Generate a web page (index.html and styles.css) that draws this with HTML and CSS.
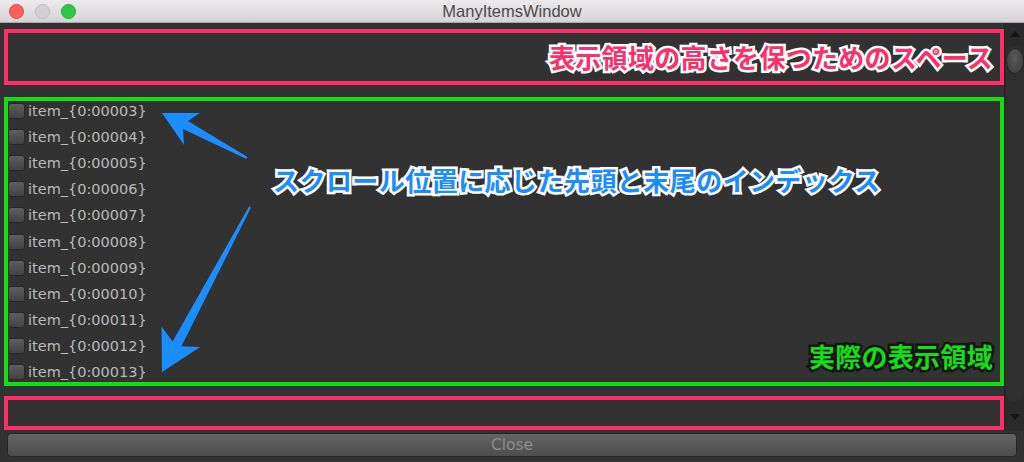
FILE: index.html
```html
<!DOCTYPE html>
<html lang="ja">
<head>
<meta charset="utf-8">
<title>ManyItemsWindow</title>
<link rel="stylesheet" href="styles.css">
</head>
<body>
<div class="window">
  <header class="titlebar">
    <div class="lights">
      <span class="light red"></span>
      <span class="light gray"></span>
      <span class="light green"></span>
    </div>
    <div class="title">ManyItemsWindow</div>
    <div></div>
  </header>
  <div class="main">
    <div class="content">
      <div class="spacer top">
        <span class="note pink">表示領域の高さを保つためのスペース</span>
      </div>
      <div class="visible">
        <ul class="items">
          <li class="item"><span class="check"></span>item_{0:00003}</li>
          <li class="item"><span class="check"></span>item_{0:00004}</li>
          <li class="item"><span class="check"></span>item_{0:00005}</li>
          <li class="item"><span class="check"></span>item_{0:00006}</li>
          <li class="item"><span class="check"></span>item_{0:00007}</li>
          <li class="item"><span class="check"></span>item_{0:00008}</li>
          <li class="item"><span class="check"></span>item_{0:00009}</li>
          <li class="item"><span class="check"></span>item_{0:00010}</li>
          <li class="item"><span class="check"></span>item_{0:00011}</li>
          <li class="item"><span class="check"></span>item_{0:00012}</li>
          <li class="item"><span class="check"></span>item_{0:00013}</li>
        </ul>
        <span class="note green-note">実際の表示領域</span>
      </div>
      <div class="spacer bottom"></div>
    </div>
    <div class="scrollbar">
      <span class="arrow up"></span>
      <div class="groove"><div class="thumb"></div></div>
      <span class="arrow down"></span>
    </div>
  </div>
  <footer class="footer">
    <button class="close">Close</button>
  </footer>

  <div class="note blue callout">スクロール位置に応じた先頭と末尾のインデックス</div>
  <svg class="arrows" width="1024" height="462" viewBox="0 0 1024 462">
    <polygon fill="#1b8dff" points="162,113 200,113 188,121 247.5,157 246.5,159 183,129 184,145"/>
    <polygon fill="#1b8dff" points="162,372 161.5,326.5 172.6,341.5 249,206.5 251,207.5 181.4,346.2 200.2,347"/>
  </svg>
</div>
</body>
</html>
```
FILE: styles.css
```css
* { box-sizing: border-box; }
html, body { margin: 0; padding: 0; }
body { background: #323232; width: 1024px; height: 462px; overflow: hidden; }

.window {
  position: relative;
  width: 1024px;
  height: 462px;
  background: #323232;
  display: flex;
  flex-direction: column;
}

.titlebar {
  height: 23px;
  flex: none;
  display: grid;
  grid-template-columns: 1fr auto 1fr;
  align-items: center;
  background: linear-gradient(#eceaec, #d5d3d5);
  border-bottom: 1px solid #a9a7a9;
}
.lights { display: flex; gap: 11px; padding-left: 9px; align-items: center; }
.light { width: 15px; height: 15px; border-radius: 50%; display: block; }
.light.red { background: #fc605c; border: 1px solid #df4744; }
.light.gray { background: #d3d2d3; border: 1px solid #bcbbbc; }
.light.green { background: #2ec845; border: 1px solid #25a936; }
.title {
  font-family: "Liberation Sans", Arial, sans-serif;
  font-size: 16.5px;
  color: #4b4b4b;
  line-height: 1;
  padding-top: 1px;
}

.main { display: flex; height: 408px; flex: none; }

.content {
  flex: 1;
  display: flex;
  flex-direction: column;
  padding: 6px 0 1px 4px;
}

.spacer { border: 4px solid #fd2f68; }
.spacer.top {
  height: 56px;
  display: flex;
  justify-content: flex-end;
  align-items: center;
  padding-right: 7px;
}
.spacer.bottom { height: 34px; margin-top: 10px; }

.visible {
  height: 289px;
  margin-top: 12px;
  border: 4px solid #12de12;
  display: flex;
  justify-content: space-between;
}

.items {
  list-style: none;
  margin: 0;
  padding: 0;
  display: flex;
  flex-direction: column;
  gap: 6.2px;
}
.item {
  height: 20px;
  display: flex;
  align-items: center;
  font-family: "DejaVu Sans", Verdana, sans-serif;
  font-size: 14.5px;
  color: #b9b9b9;
  white-space: nowrap;
}
.check {
  width: 17px;
  height: 16px;
  margin-right: 3px;
  border-radius: 3px;
  border: 1px solid #282828;
  background: linear-gradient(#5e5e5e, #424242);
  display: block;
  flex: none;
}

.note {
  font-family: "Noto Sans CJK JP", "Noto Sans", sans-serif;
  font-weight: 700;
  font-size: 26px;
  line-height: 1;
  letter-spacing: 0.3px;
  paint-order: stroke fill;
  white-space: nowrap;
}
.pink { color: #fd2f68; -webkit-text-stroke: 5px #ffffff; }
.green-note {
  color: #14de14;
  -webkit-text-stroke: 5px #141414;
  align-self: flex-end;
  margin-right: 7px;
  margin-bottom: 13px;
}
.blue {
  color: #1b8dff;
  -webkit-text-stroke: 5px #ffffff;
  letter-spacing: 0.45px;
}
.callout { position: absolute; left: 273px; top: 167px; }

.arrows { position: absolute; left: 0; top: 0; pointer-events: none; }

.scrollbar {
  width: 20px;
  flex: none;
  background: #2a2a2a;
  border-left: 1px solid #222;
  display: flex;
  flex-direction: column;
  align-items: center;
  padding: 8px 0 11px;
}
.arrow { width: 0; height: 0; display: block; border-left: 5px solid transparent; border-right: 5px solid transparent; }
.arrow.up { border-bottom: 6px solid #141414; }
.arrow.down { border-top: 6px solid #141414; margin-top: 12px; }
.groove {
  margin-top: 9px;
  width: 18px;
  height: 356px;
  border-radius: 9px;
  background: #2f2f2f;
}
.thumb {
  width: 18px;
  height: 26px;
  margin-top: 2px;
  border-radius: 9px / 12px;
  background: radial-gradient(ellipse at 50% 40%, #5a5a5a, #3f3f3f 80%);
  border: 1px solid #262626;
}

.footer { flex: 1; padding: 2px 7px 5px 7px; }
.close {
  width: 1010px;
  height: 24px;
  display: flex;
  align-items: center;
  justify-content: center;
  border: 1px solid #262626;
  border-radius: 4px;
  background: linear-gradient(#646464, #4d4d4d);
  color: #8c8c8c;
  font-family: "DejaVu Sans", Verdana, sans-serif;
  font-size: 15.5px;
  padding: 0;
}
```
